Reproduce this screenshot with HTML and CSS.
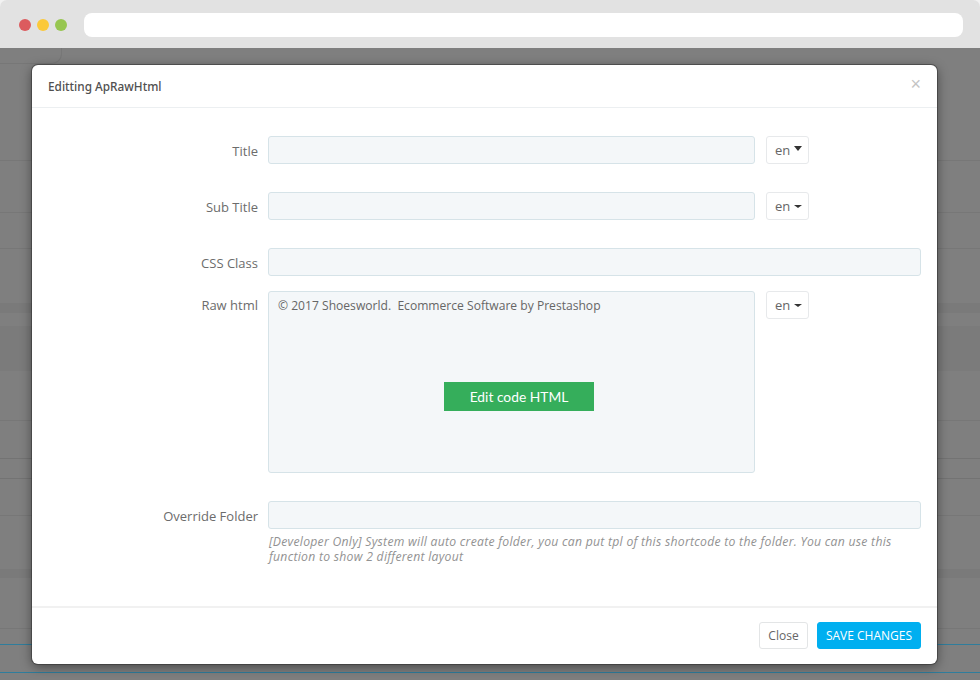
FILE: index.html
```html
<!DOCTYPE html>
<html lang="en">
<head>
<meta charset="utf-8">
<title>Editting ApRawHtml</title>
<link rel="stylesheet" href="styles.css">
</head>
<body>
<div class="window">
  <header class="chrome">
    <span class="dot dot-red"></span>
    <span class="dot dot-yellow"></span>
    <span class="dot dot-green"></span>
    <div class="address"></div>
  </header>
  <div class="page">
    <div class="backdrop">
      <div class="bg bg-h1"><div class="tab"></div></div>
      <div class="bg bg-h2"></div>
      <div class="bg bg-h3"></div>
      <div class="bg bg-h4"></div>
      <div class="bg bg-band1"></div>
      <div class="bg bg-h5"></div>
      <div class="bg bg-band2"></div>
      <div class="bg bg-h6"></div>
      <div class="bg bg-h7"></div>
      <div class="bg bg-h8"></div>
      <div class="bg bg-h9"></div>
      <div class="bg bg-h10"></div>
      <div class="bg bg-band3"></div>
      <div class="bg bg-h11"></div>
      <div class="bg bg-h12"></div>
      <div class="bg bg-h13"></div>
    </div>
    <section class="modal">
      <div class="modal-header">
        <h4 class="modal-title">Editting ApRawHtml</h4>
        <span class="modal-close">×</span>
      </div>
      <form class="modal-body">
        <div class="row">
          <label class="label">Title</label>
          <div class="input"></div>
          <div class="lang">en<span class="caret caret-big"></span></div>
        </div>
        <div class="row">
          <label class="label">Sub Title</label>
          <div class="input"></div>
          <div class="lang">en<span class="caret"></span></div>
        </div>
        <div class="row row-tight">
          <label class="label">CSS Class</label>
          <div class="input input-wide"></div>
        </div>
        <div class="row">
          <label class="label label-top">Raw html</label>
          <div class="input editor">
            <p class="editor-text">© 2017 Shoesworld.&nbsp; Ecommerce Software by Prestashop</p>
            <div class="edit-btn">Edit code HTML</div>
          </div>
          <div class="lang">en<span class="caret"></span></div>
        </div>
        <div class="row row-last">
          <label class="label">Override Folder</label>
          <div class="input input-wide"></div>
          <p class="help">[Developer Only] System will auto create folder, you can put tpl of this shortcode to the folder. You can use this function to show 2 different layout</p>
        </div>
      </form>
      <div class="modal-footer">
        <div class="btn btn-close">Close</div>
        <div class="btn btn-save">SAVE CHANGES</div>
      </div>
    </section>
  </div>
</div>
</body>
</html>
```
FILE: styles.css
```css
* { box-sizing: border-box; }
html, body { margin: 0; padding: 0; }
body {
  width: 980px;
  height: 680px;
  overflow: hidden;
  background: #f2f2f2;
  font-family: "Open Sans", "Liberation Sans", sans-serif;
  color: #666;
}
.window { width: 980px; height: 680px; display: flex; flex-direction: column; }
.chrome {
  height: 48px;
  flex: none;
  display: flex;
  align-items: center;
  padding: 2px 17px 0 18.5px;
  background: #e2e2e2;
  border-radius: 7px 7px 0 0;
}
.dot { width: 12px; height: 12px; border-radius: 50%; margin-right: 6px; flex: none; }
.dot-red { background: #dc5b5e; }
.dot-yellow { background: #fbc93a; }
.dot-green { background: #97c650; }
.address {
  flex: 1;
  height: 24px;
  margin-left: 11.5px;
  background: #fff;
  border-radius: 8px;
}
.page { position: relative; flex: 1; background: #7f7f7f; overflow: hidden; }
.backdrop { display: flex; flex-direction: column; height: 100%; }
.bg { flex: none; border-bottom: 1px solid #777; }
.tab {
  width: 62px;
  height: 16px;
  border-right: 1px solid #777;
  border-bottom: 1px solid #777;
  border-bottom-right-radius: 10px;
}
.bg-h1 { height: 113px; }
.bg-h2 { height: 52px; }
.bg-h3 { height: 36px; }
.bg-h4 { height: 54px; border-bottom: 0; }
.bg-band1 { height: 10px; background: #7a7a7a; border-bottom: 0; }
.bg-h5 { height: 13px; border-bottom: 0; }
.bg-band2 { height: 45px; background: #7b7b7b; border-bottom: 0; }
.bg-h6 { height: 50px; }
.bg-h7 { height: 38px; border-bottom-color: #737373; }
.bg-h8 { height: 20px; border-bottom-color: #737373; }
.bg-h9 { height: 37px; }
.bg-h10 { height: 53px; border-bottom: 0; }
.bg-band3 { height: 9px; background: #7a7a7a; border-bottom: 0; }
.bg-h11 { height: 51px; }
.bg-h12 { height: 16px; border-bottom-color: #2f7d9c; }
.bg-h13 { height: 28px; border-bottom-color: #2f7d9c; }
.modal {
  position: absolute;
  left: 32px;
  top: 17px;
  width: 905px;
  height: 599px;
  display: flex;
  flex-direction: column;
  background: #fff;
  border-radius: 6px;
  box-shadow: 0 0 0 1px rgba(50,50,50,.55), 0 3px 12px rgba(0,0,0,.45);
}
.modal-header {
  height: 43px;
  flex: none;
  display: flex;
  align-items: center;
  justify-content: space-between;
  padding: 0 16px;
  border-bottom: 1px solid #eceff1;
}
.modal-title {
  margin: 0;
  font-size: 11.8px;
  font-weight: 500;
  color: #505050;
  font-family: "Noto Sans", "Open Sans", sans-serif;
}
.modal-close { font-size: 18px; line-height: 18px; color: #c4c4c4; margin: -4px 0 0; font-family: "Liberation Sans", sans-serif; }
.modal-body { flex: 1; padding: 28px 16px 0 10px; display: block; }
.row {
  display: grid;
  grid-template-columns: 216px 487px 44px;
  column-gap: 10px;
  margin-bottom: 28px;
  font-size: 13px;
  line-height: 30px;
}
.row .lang { margin-left: 1px; }
.row-tight { margin-bottom: 15px; }
.row-last { margin-bottom: 0; }
.label { height: 28px; text-align: right; color: #6c6c6c; }
.label-top { line-height: 28px; }
.input {
  height: 28px;
  background: #f4f7f9;
  border: 1px solid #d6e3e8;
  border-radius: 3px;
}
.input-wide { grid-column: 2 / 4; width: 653px; }
.lang {
  height: 28px;
  display: flex;
  align-items: center;
  padding-left: 8px;
  background: #fff;
  border: 1px solid #e7e9eb;
  border-radius: 3px;
  color: #666;
  font-size: 13px;
}
.caret {
  width: 0;
  height: 0;
  margin-left: 4px;
  border-left: 4px solid transparent;
  border-right: 4px solid transparent;
  border-top: 3px solid #333;
}
.caret-big { border-top-width: 5px; margin-top: -3px; }
.editor {
  height: 182px;
  padding: 0 9px;
  display: flex;
  flex-direction: column;
  align-items: center;
}
.editor-text { align-self: stretch; margin: 0; font-size: 12.1px; line-height: 27px; color: #666; }
.edit-btn {
  width: 150px;
  height: 29px;
  margin: 63px 0 0 15px;
  background: #35ae5b;
  color: #fff;
  text-align: center;
  font-family: Lato, sans-serif;
  font-size: 13.8px;
  line-height: 29px;
}
.help {
  grid-column: 2 / 4;
  width: 640px;
  margin: 5px 0 0 1px;
  font-size: 12.2px;
  letter-spacing: .27px;
  line-height: 15px;
  font-style: italic;
  color: #929292;
}
.modal-footer {
  height: 58px;
  flex: none;
  display: flex;
  justify-content: flex-end;
  align-items: flex-start;
  gap: 9px;
  padding: 14px 16px 0 0;
  border-top: 2px solid #f1f1f1;
}
.btn {
  height: 27px;
  border-radius: 3px;
  font-size: 12px;
  line-height: 25px;
  text-align: center;
  border: 1px solid transparent;
}
.btn-close { width: 49px; background: #fff; border-color: #e3e5e6; color: #666; }
.btn-save { width: 104px; background: #00aff0; border-color: #00aff0; color: #fff; }
```
